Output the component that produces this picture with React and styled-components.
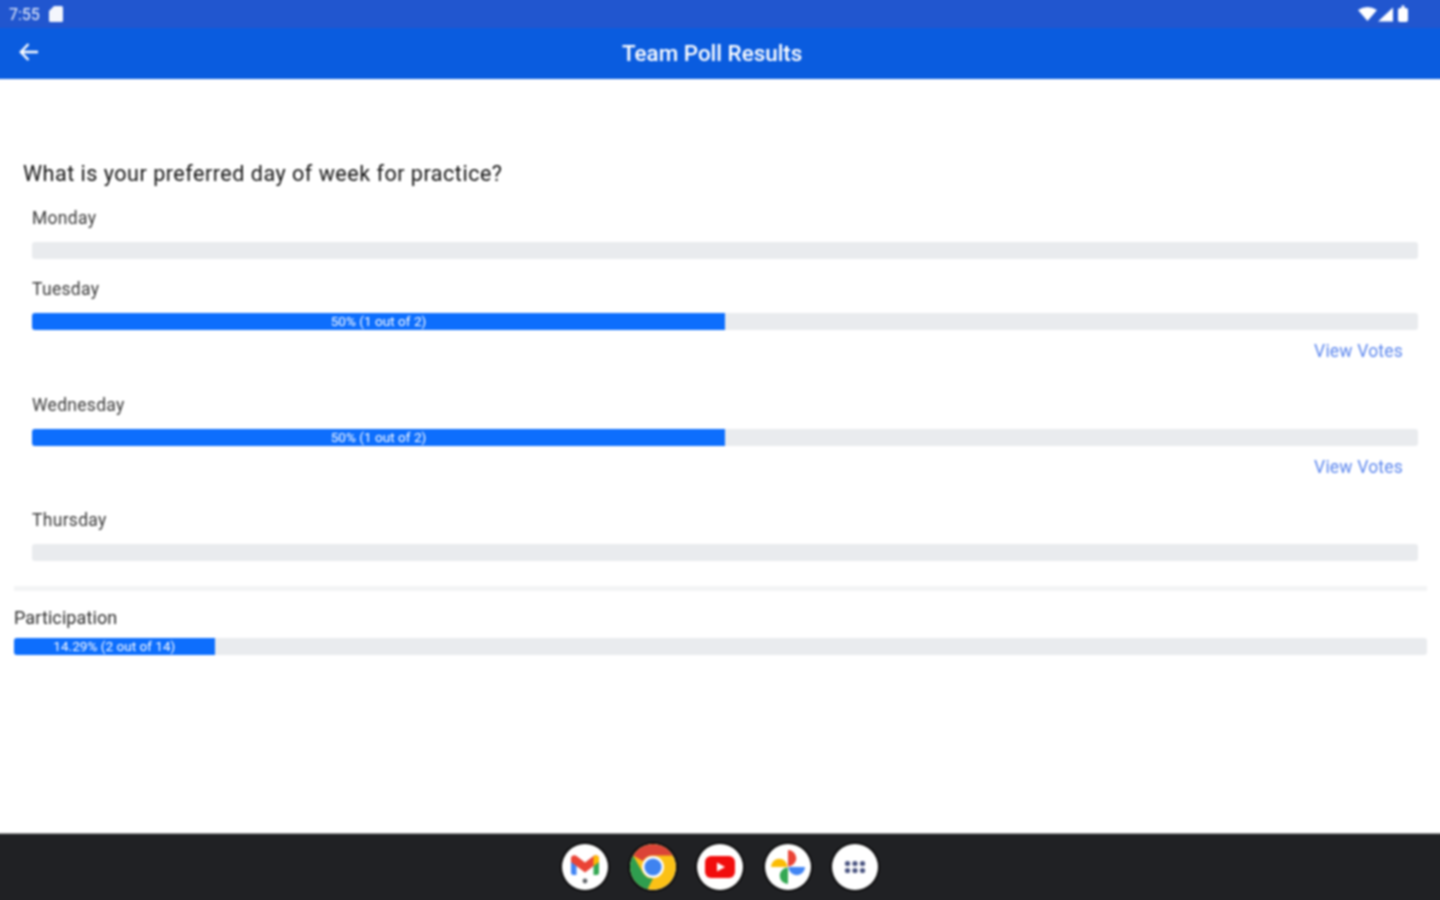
import styled, { createGlobalStyle } from "styled-components"

const Global = createGlobalStyle`
  html, body { margin: 0; padding: 0; background: #fff; overflow: hidden; }
  body { font-family: Roboto, "Liberation Sans", sans-serif; }
`

const options = [
  { name: "Monday" },
  { name: "Tuesday", percent: 50, label: "50% (1 out of 2)" },
  { name: "Wednesday", percent: 50, label: "50% (1 out of 2)" },
  { name: "Thursday" },
]

function BackIcon() {
  return (
    <svg width="24" height="24" viewBox="0 0 24 24" fill="none" stroke="#fff" strokeWidth="2.4">
      <path d="M21 12H4M11.5 4L3.8 12l7.7 8" />
    </svg>
  )
}

function SdCardIcon() {
  return (
    <svg width="16" height="18" viewBox="0 0 16 18" fill="#f4f6fc">
      <path d="M6 1h7.5A1.5 1.5 0 0 1 15 2.500V15.500A1.500 1.500 0 0 1 13.500 17H2.500A1.500 1.500 0 0 1 1 15.500V6z" />
    </svg>
  )
}

function StatusIcons() {
  return (
    <svg width="54" height="20" viewBox="0 0 54 20" fill="#fff">
      <path d="M0 6Q9.500 0 19 6L9.500 17z" />
      <path d="M20 17.500L35 3.500V17.500z" />
      <path d="M40 6a2 2 0 0 1 2-2h1.500V1.500h3V4H48a2 2 0 0 1 2 2v10a2 2 0 0 1-2 2h-6a2 2 0 0 1-2-2z" />
    </svg>
  )
}

function GmailIcon() {
  return (
    <svg width="46" height="46" viewBox="0 0 46 46">
      <path d="M9 13h5.500v18h-3A2.500 2.500 0 0 1 9 28.500z" fill="#4285f4" />
      <path d="M31.500 13H37v15.500A2.500 2.500 0 0 1 34.500 31h-3z" fill="#34a853" />
      <path d="M9 14.500C9 11.500 12.500 10.500 14.500 12L23 18.500 31.500 12c2-1.500 5.500-.5 5.500 2.500V18l-5.500 4L23 28.500 14.500 22 9 18z" fill="#ea4335" />
      <path d="M31.500 12c2-1.500 5.500-.5 5.500 2.500V18l-5.500 4z" fill="#fbbc04" />
      <circle cx="23" cy="37" r="2.400" fill="#5f6368" />
    </svg>
  )
}

function ChromeIcon() {
  return (
    <svg width="46" height="46" viewBox="0 0 46 46">
      <circle cx="23" cy="23" r="23" fill="#fbc116" />
      <path d="M23 0A23 23 0 0 1 43 11.500H23A11.500 11.500 0 0 0 13 17L3 11.500A23 23 0 0 1 23 0z" fill="#db4437" />
      <path d="M3 11.500L13 29A11.500 11.500 0 0 0 23 34.500L17 46A23 23 0 0 1 3 11.500z" fill="#2f9e4f" />
      <circle cx="23" cy="23" r="11" fill="#fff" />
      <circle cx="23" cy="23" r="8.600" fill="#3f83f0" />
    </svg>
  )
}

function YoutubeIcon() {
  return (
    <svg width="46" height="46" viewBox="0 0 46 46">
      <rect x="8" y="12" width="30" height="22" rx="6" fill="#f10d0d" />
      <path d="M20 18.500L28 23l-8 4.500z" fill="#fff" />
    </svg>
  )
}

function PhotosIcon() {
  return (
    <svg width="46" height="46" viewBox="0 0 46 46">
      <path d="M23 22.500V6a8.250 8.250 0 0 1 0 16.500z" fill="#ea4335" />
      <path d="M23.500 23H40a8.250 8.250 0 0 1-16.500 0z" fill="#4285f4" />
      <path d="M23 23.500V40a8.250 8.250 0 0 1 0-16.500z" fill="#34a853" />
      <path d="M22.500 23H6a8.250 8.250 0 0 1 16.500 0z" fill="#fbbc04" />
    </svg>
  )
}

function AppsIcon() {
  const dots = []
  for (const cy of [19.500, 26.500]) {
    for (const cx of [15.500, 23, 30.500]) dots.push(<circle key={`${cx}-${cy}`} cx={cx} cy={cy} r="2.600" fill="#4a5480" />)
  }
  return (
    <svg width="46" height="46" viewBox="0 0 46 46">
      {dots}
    </svg>
  )
}

function ProgressBar({ percent, label }) {
  return (
    <Track>
      {percent ? (
        <Fill style={{ width: `${percent}%` }}>{label}</Fill>
      ) : null}
    </Track>
  )
}

export default function App() {
  return (
    <Page>
      <Global />
      <StatusBar>
        <StatusLeft>
          <Clock>7:55</Clock>
          <SdCardIcon />
        </StatusLeft>
        <StatusIcons />
      </StatusBar>
      <Toolbar>
        <BackButton>
          <BackIcon />
        </BackButton>
        <Title>Team Poll Results</Title>
      </Toolbar>

      <Content>
        <Question>What is your preferred day of week for practice?</Question>
        <OptionList>
          {options.map((o) => (
            <Option key={o.name}>
              <OptionName>{o.name}</OptionName>
              <ProgressBar percent={o.percent} label={o.label} />
              {o.percent ? <ViewVotes>View Votes</ViewVotes> : null}
            </Option>
          ))}
        </OptionList>
        <Divider />
        <ParticipationLabel>Participation</ParticipationLabel>
        <ProgressBar percent={14.2} label="14.29% (2 out of 14)" />
      </Content>

      <Dock>
        <DockIcon><GmailIcon /></DockIcon>
        <DockIcon><ChromeIcon /></DockIcon>
        <DockIcon><YoutubeIcon /></DockIcon>
        <DockIcon><PhotosIcon /></DockIcon>
        <DockIcon><AppsIcon /></DockIcon>
      </Dock>
    </Page>
  )
}

/* 4px bleed on every side so the blur does not fade out at the window edge */
const Page = styled.div`
  width: 1448px;
  height: 908px;
  margin: -4px;
  display: flex;
  flex-direction: column;
  overflow: hidden;
  background: #fff;
  filter: blur(0.8px);
`

const StatusBar = styled.div`
  height: 32px;
  box-sizing: border-box;
  flex: none;
  background: #2156cf;
  display: flex;
  align-items: center;
  justify-content: space-between;
  padding: 4px 32px 0 13px;
`

const StatusLeft = styled.div`
  display: flex;
  align-items: center;
  gap: 8px;
`

const Clock = styled.span`
  font-size: 16px;
  color: #eef2fc;
`

const Toolbar = styled.div`
  height: 51px;
  flex: none;
  background: #0a5cdf;
  display: flex;
  align-items: center;
  position: relative;
`

const BackButton = styled.div`
  display: flex;
  margin: 0 0 3px 21px;
`

const Title = styled.h1`
  position: absolute;
  left: 626px;
  top: 11px;
  margin: 0;
  font-size: 22.400px;
  line-height: 28px;
  font-weight: 500;
  color: #fff;
  white-space: nowrap;
`

const Content = styled.main`
  flex: 1;
  padding: 81px 17px 0 18px;
`

const Question = styled.h2`
  margin: 0 0 0 9px;
  font-size: 21.500px;
  line-height: 28px;
  font-weight: 400;
  letter-spacing: 0.52px;
  color: #111;
`

const OptionList = styled.div`
  padding: 0 9px 0 18px;
`

const Option = styled.div`
  padding-top: 16px;
`

const OptionName = styled.div`
  font-size: 17.500px;
  line-height: 28px;
  letter-spacing: 0.3px;
  color: #3a3a3a;
  margin-bottom: 10px;
`

const Track = styled.div`
  height: 17px;
  background: #e9ebee;
  border-radius: 3px;
  overflow: hidden;
`

const Fill = styled.div`
  height: 100%;
  background: #0d6efd;
  color: #fff;
  font-size: 13.600px;
  line-height: 17px;
  text-align: center;
  white-space: nowrap;
`

const ViewVotes = styled.div`
  font-size: 17.500px;
  line-height: 24px;
  letter-spacing: 0.2px;
  color: #5b86ee;
  text-align: right;
  padding: 9px 15px 0 0;
  margin-bottom: 11.500px;
`

const Divider = styled.div`
  height: 5px;
  background: #f3f4f5;
  margin-top: 25px;
`

const ParticipationLabel = styled.div`
  font-size: 18px;
  line-height: 28px;
  letter-spacing: 0.1px;
  color: #2c2c2c;
  margin: 13px 0 6px;
`

const Dock = styled.footer`
  height: 71px;
  flex: none;
  background: #202124;
  border-top: 1px solid #9a9b9d;
  box-sizing: border-box;
  padding-bottom: 4px;
  display: flex;
  align-items: center;
  justify-content: center;
  gap: 21.500px;
`

const DockIcon = styled.div`
  width: 46px;
  height: 46px;
  border-radius: 50%;
  background: #fff;
  overflow: hidden;
  display: flex;
  box-shadow: 0 0 0 2px #0c0c0d;
`
